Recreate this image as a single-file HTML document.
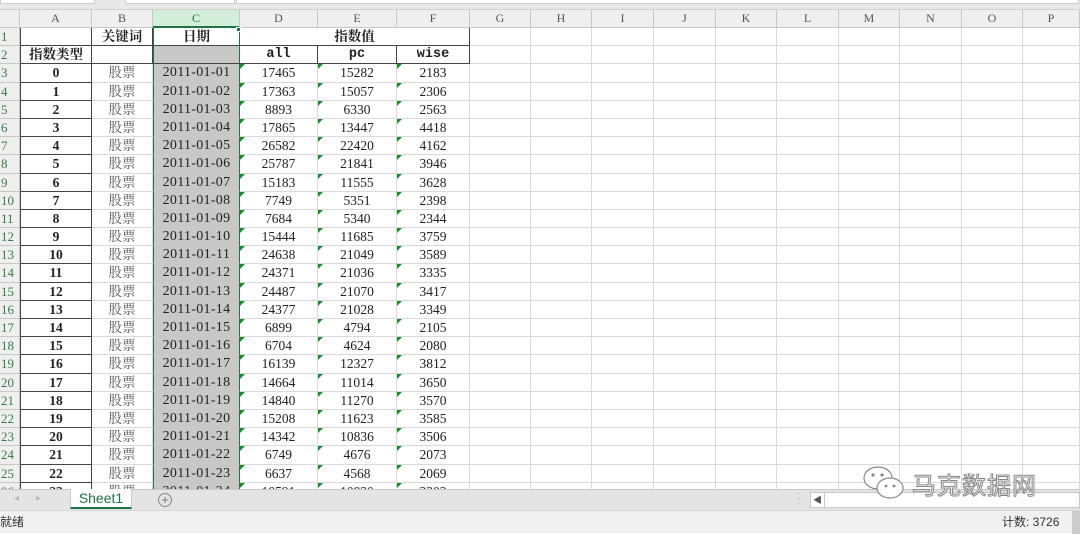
<!DOCTYPE html>
<html><head><meta charset="utf-8"><style>
*{box-sizing:border-box;margin:0;padding:0}
body{width:1080px;height:533px;overflow:hidden;background:#fff;position:relative;font-family:"Liberation Serif","Noto Serif CJK SC",serif;}
#top{position:absolute;left:0;top:0;width:1080px;height:10px;background:#e8e8e8;border-bottom:1px solid #d0d0d0}
#top div{position:absolute;top:0;height:4px;background:#fff;border:1px solid #ccc;border-top:none}
#grid{position:absolute;left:0;top:10px;width:1080px;height:479px;overflow:hidden}
.r{display:flex;height:18.2px}
.c{flex:none;height:100%;border-right:1px solid #dadada;border-bottom:1px solid #dadada;text-align:center;font-size:13.5px;line-height:17px;color:#222;white-space:nowrap;position:relative}
.h{background:#efefef;color:#555;font-size:12px;border-color:#c8c8c8;font-family:"Liberation Serif",serif}
.rh{background:#efefef;color:#3a7a4a;font-size:13px;border-color:#c8c8c8;text-align:left;padding-left:1px}
.b{font-weight:bold}
.d{border-color:#444}
.g{background:#c8c8c8;border-left:1.5px solid #217346;border-right:1.5px solid #217346;font-size:14px;letter-spacing:0.3px}
.t::before{content:"";position:absolute;left:0;top:0;border-top:5px solid #1a8a2a;border-right:5px solid transparent}
.k{color:#555}
#tabs{position:absolute;left:0;top:489px;width:1080px;height:21px;background:#e4e4e4;border-top:1px solid #c8c8c8}
#status{position:absolute;left:0;top:510px;width:1080px;height:23px;background:#f0f0f0;border-top:1px solid #d8d8d8;font-family:"Liberation Sans","Noto Sans CJK SC",sans-serif;font-size:12px;line-height:22px;color:#333}
</style></head><body>
<div id="top"><div style="left:0;width:95px"></div><div style="left:125px;width:110px"></div><div style="left:236px;width:843px"></div></div>
<div id="grid">
<div class="r" style="height:18px">
<div class="c h" style="width:20px"></div><div class="c h" style="width:72px">A</div><div class="c h" style="width:61px">B</div><div class="c h" style="width:87px;background:#d3eedb;color:#217346;border-bottom:2px solid #217346">C</div><div class="c h" style="width:78px">D</div><div class="c h" style="width:79px">E</div><div class="c h" style="width:73px">F</div><div class="c h" style="width:61px">G</div><div class="c h" style="width:61px">H</div><div class="c h" style="width:62px">I</div><div class="c h" style="width:62px">J</div><div class="c h" style="width:61px">K</div><div class="c h" style="width:62px">L</div><div class="c h" style="width:61px">M</div><div class="c h" style="width:62px">N</div><div class="c h" style="width:61px">O</div><div class="c h" style="width:57px">P</div>
</div>
<div class="r"><div class="c rh" style="width:20px">1</div><div class="c d" style="width:72px;border-left:1px solid #444"></div><div class="c b d" style="width:61px">关键词</div><div class="c b d" style="width:87px;border-left:1.5px solid #217346;border-right:1.5px solid #217346">日期</div><div class="c b d" style="width:230px">指数值</div><div class="c" style="width:61px"></div><div class="c" style="width:61px"></div><div class="c" style="width:62px"></div><div class="c" style="width:62px"></div><div class="c" style="width:61px"></div><div class="c" style="width:62px"></div><div class="c" style="width:61px"></div><div class="c" style="width:62px"></div><div class="c" style="width:61px"></div><div class="c" style="width:57px"></div></div>
<div class="r"><div class="c rh" style="width:20px">2</div><div class="c b d" style="width:72px;border-left:1px solid #444">指数类型</div><div class="c d" style="width:61px"></div><div class="c g d" style="width:87px"></div><div class="c b d" style="width:78px;font-family:'Liberation Mono',monospace">all</div><div class="c b d" style="width:79px;font-family:'Liberation Mono',monospace">pc</div><div class="c b d" style="width:73px;font-family:'Liberation Mono',monospace">wise</div><div class="c" style="width:61px"></div><div class="c" style="width:61px"></div><div class="c" style="width:62px"></div><div class="c" style="width:62px"></div><div class="c" style="width:61px"></div><div class="c" style="width:62px"></div><div class="c" style="width:61px"></div><div class="c" style="width:62px"></div><div class="c" style="width:61px"></div><div class="c" style="width:57px"></div></div>
<script>
var d=[[17465,15282,2183],[17363,15057,2306],[8893,6330,2563],[17865,13447,4418],[26582,22420,4162],[25787,21841,3946],[15183,11555,3628],[7749,5351,2398],[7684,5340,2344],[15444,11685,3759],[24638,21049,3589],[24371,21036,3335],[24487,21070,3417],[24377,21028,3349],[6899,4794,2105],[6704,4624,2080],[16139,12327,3812],[14664,11014,3650],[14840,11270,3570],[15208,11623,3585],[14342,10836,3506],[6749,4676,2073],[6637,4568,2069],[18591,10830,3303]];
var w=[61,61,62,62,61,62,61,62,61,57],h='';
for(var i=0;i<d.length;i++){var day=('0'+(i+1)).slice(-2);
h+='<div class="r"><div class="c rh" style="width:20px">'+(i+3)+'</div><div class="c b d" style="width:72px;border-left:1px solid #444">'+i+'</div><div class="c k" style="width:61px">股票</div><div class="c g" style="width:87px;border-bottom-color:#c8c8c8">2011-01-'+day+'</div><div class="c t" style="width:78px">'+d[i][0]+'</div><div class="c t" style="width:79px">'+d[i][1]+'</div><div class="c t" style="width:73px">'+d[i][2]+'</div>';
for(var j=0;j<w.length;j++)h+='<div class="c" style="width:'+w[j]+'px"></div>';h+='</div>';}
document.write(h);
</script>
</div>
<div style="position:absolute;left:236px;top:27px;width:5px;height:5px;background:#217346;border:1px solid #fff"></div>
<div id="tabs">
<span style="position:absolute;left:14px;top:3px;color:#bbb;font-size:10px">◂</span><span style="position:absolute;left:36px;top:3px;color:#bbb;font-size:10px">▸</span>
<div style="position:absolute;left:70px;top:-1px;width:62px;height:20px;background:#fff;border:1px solid #c8c8c8;border-top:none;border-bottom:2px solid #217346;color:#217346;font-family:'Liberation Sans',sans-serif;font-size:14px;text-align:center;line-height:18px">Sheet1</div>
<div style="position:absolute;left:158px;top:3px;width:14px;height:14px;border:1px solid #888;border-radius:50%;color:#777;font-size:13px;line-height:11px;text-align:center;font-family:'Liberation Sans',sans-serif">+</div>
<span style="position:absolute;left:797px;top:2px;color:#aaa;font-size:10px;line-height:5px">·<br>·<br>·</span>
<div style="position:absolute;left:810px;top:2px;width:270px;height:16px;background:#fff;border:1px solid #c8c8c8"></div>
<div style="position:absolute;left:811px;top:3px;width:14px;height:14px;border-right:1px solid #c8c8c8;font-size:9px;color:#555;text-align:center;line-height:14px">◀</div>
</div>
<div id="status"><span style="position:absolute;left:0">就绪</span><span style="position:absolute;left:1002px">计数: 3726</span><div style="position:absolute;right:0;top:0;width:8px;height:23px;background:#ccc"></div></div>
<div style="position:absolute;left:862px;top:466px;font-family:'Liberation Sans','Noto Sans CJK SC',sans-serif;font-size:24px;color:#fff;-webkit-text-stroke:1px #888;letter-spacing:1px;padding-left:50px">
<svg style="position:absolute;left:0;top:0" width="46" height="36" viewBox="0 0 46 36"><ellipse cx="16" cy="12" rx="14" ry="11" fill="#fff" stroke="#888" stroke-width="1.2"/><ellipse cx="28" cy="22" rx="13" ry="10" fill="#fff" stroke="#888" stroke-width="1.2"/><circle cx="11" cy="9" r="1.6" fill="#888"/><circle cx="20" cy="9" r="1.6" fill="#888"/><circle cx="24" cy="20" r="1.4" fill="#888"/><circle cx="32" cy="20" r="1.4" fill="#888"/></svg>马克数据网</div>
</body></html>
